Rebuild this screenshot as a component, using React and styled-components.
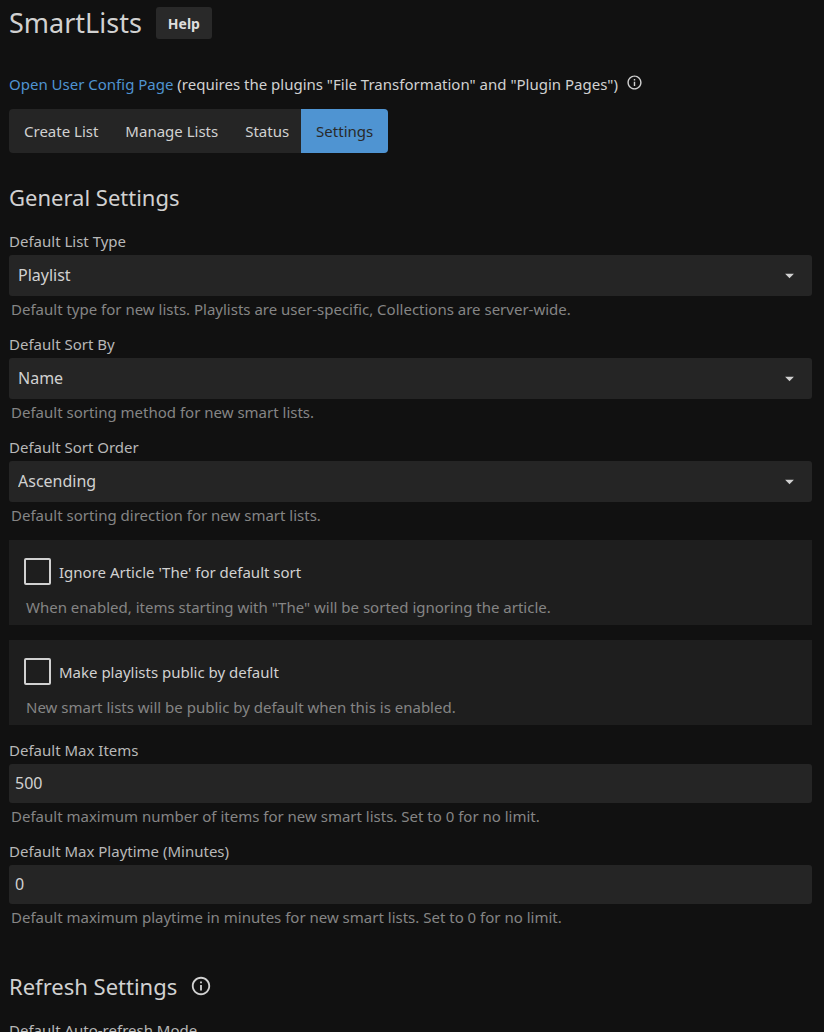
import React, { useState } from "react";
import styled, { createGlobalStyle } from "styled-components";
import { MdArrowDropDown, MdInfoOutline } from "react-icons/md";

const GlobalStyle = createGlobalStyle`
  * {
    box-sizing: border-box;
  }
  html {
    scrollbar-width: none;
  }
  body {
    margin: 0;
    background: #111;
    color: #d1d1d1;
    font-family: "Noto Sans", sans-serif;
    font-size: 15px;
    line-height: 20px;
  }
  button, input, select {
    font-family: inherit;
  }
`;

const Page = styled.main`
  height: 100vh;
  overflow-y: auto;
  scrollbar-width: none;
  padding: 7px 12px 0 9px;
`;

const Header = styled.header`
  display: flex;
  align-items: center;
  gap: 14px;
`;

const Title = styled.h1`
  margin: 0;
  font-size: 27px;
  font-weight: 400;
  line-height: 32px;
`;

const HelpButton = styled.button`
  height: 32px;
  padding: 0 12px;
  border: none;
  border-radius: 3px;
  background: #292929;
  color: #dedede;
  font-size: 14px;
  font-weight: 700;
  cursor: pointer;
`;

const Notice = styled.div`
  display: flex;
  margin-top: 35px;
  gap: 8px;
`;

const ConfigLink = styled.a`
  color: #4f94d2;
  text-decoration: none;
`;

const InfoButton = styled.button`
  display: flex;
  align-self: ${(props) => (props.$raised ? "flex-start" : "center")};
  padding: 0;
  border: none;
  background: none;
  color: inherit;
  font-size: ${(props) => (props.$raised ? "17px" : "22px")};
  cursor: pointer;
`;

const Tabs = styled.nav`
  display: flex;
  width: fit-content;
  margin-top: 15px;
  border-radius: 4px;
  background: #252525;
  overflow: hidden;
`;

const Tab = styled.button`
  height: 44px;
  padding: 0 15px;
  border: none;
  background: ${(props) => (props.$active ? "#4f94d2" : "none")};
  color: ${(props) => (props.$active ? "#292929" : "#d1d1d1")};
  font-size: 15px;
  cursor: pointer;

  & + & {
    margin-left: -3px;
  }
`;

const SectionTitle = styled.h2`
  display: flex;
  gap: 13px;
  margin: 0 0 18px;
  padding-top: 28px;
  font-size: 22px;
  font-weight: 400;
  line-height: 32px;
`;

const Field = styled.div`
  display: flex;
  flex-direction: column;
  margin-bottom: 15px;
`;

const Label = styled.label`
  margin-bottom: 4px;
  color: #b8b8b8;
`;

const SelectBox = styled.div`
  position: relative;
`;

const Select = styled.select`
  display: block;
  width: 100%;
  height: 41px;
  padding: 0 40px 2px 9px;
  border: none;
  border-radius: 3px;
  appearance: none;
  background: #252525;
  color: #d1d1d1;
  font-size: 16px;
`;

const SelectArrow = styled(MdArrowDropDown)`
  position: absolute;
  top: 10px;
  right: 12px;
  font-size: 21px;
  pointer-events: none;
`;

const Input = styled.input`
  width: 100%;
  height: 39px;
  padding: 0 6px 2px;
  border: none;
  border-radius: 3px;
  appearance: textfield;
  background: #252525;
  color: #d1d1d1;
  font-size: 16px;
`;

const Help = styled.div`
  margin-top: 3px;
  padding-left: 2px;
  color: #858585;
`;

const CheckboxPanel = styled.div`
  margin-bottom: 15px;
  padding: 18px 15px 8px;
  background: #1e1e1e;
`;

const CheckboxLabel = styled.label`
  display: flex;
  align-items: center;
  gap: 8px;
  margin-bottom: 12px;
`;

const Checkbox = styled.input`
  width: 27px;
  height: 27px;
  margin: 0;
  border: 2px solid #d1d1d1;
  border-radius: 2px;
  appearance: none;

  &:checked {
    border-color: #4f94d2;
    background: #4f94d2;
  }
`;

const SelectField = ({ id, label, options, help }) => (
  <Field>
    <Label htmlFor={id}>{label}</Label>
    <SelectBox>
      <Select id={id}>
        {options.map((option) => (
          <option key={option}>{option}</option>
        ))}
      </Select>
      <SelectArrow />
    </SelectBox>
    {help && <Help>{help}</Help>}
  </Field>
);

const NumberField = ({ id, label, value, help }) => (
  <Field>
    <Label htmlFor={id}>{label}</Label>
    <Input id={id} type="number" min="0" defaultValue={value} />
    <Help>{help}</Help>
  </Field>
);

const CheckboxField = ({ id, label, help }) => (
  <CheckboxPanel>
    <CheckboxLabel htmlFor={id}>
      <Checkbox id={id} type="checkbox" />
      {label}
    </CheckboxLabel>
    <Help>{help}</Help>
  </CheckboxPanel>
);

const tabs = ["Create List", "Manage Lists", "Status", "Settings"];

const App = () => {
  const [activeTab, setActiveTab] = useState("Settings");

  return (
    <>
      <GlobalStyle />
      <Page>
        <Header>
          <Title>SmartLists</Title>
          <HelpButton type="button">Help</HelpButton>
        </Header>

        <Notice>
          <span>
            <ConfigLink href="#config">Open User Config Page</ConfigLink> (requires the plugins "File Transformation" and
            "Plugin Pages")
          </span>
          <InfoButton type="button" $raised>
            <MdInfoOutline />
          </InfoButton>
        </Notice>

        <Tabs>
          {tabs.map((tab) => (
            <Tab key={tab} type="button" $active={tab === activeTab} onClick={() => setActiveTab(tab)}>
              {tab}
            </Tab>
          ))}
        </Tabs>

        <SectionTitle>General Settings</SectionTitle>
        <SelectField
          id="listType"
          label="Default List Type"
          options={["Playlist"]}
          help="Default type for new lists. Playlists are user-specific, Collections are server-wide."
        />
        <SelectField
          id="sortBy"
          label="Default Sort By"
          options={["Name"]}
          help="Default sorting method for new smart lists."
        />
        <SelectField
          id="sortOrder"
          label="Default Sort Order"
          options={["Ascending"]}
          help="Default sorting direction for new smart lists."
        />
        <CheckboxField
          id="ignoreArticle"
          label="Ignore Article 'The' for default sort"
          help={'When enabled, items starting with "The" will be sorted ignoring the article.'}
        />
        <CheckboxField
          id="makePublic"
          label="Make playlists public by default"
          help="New smart lists will be public by default when this is enabled."
        />
        <NumberField
          id="maxItems"
          label="Default Max Items"
          value={500}
          help="Default maximum number of items for new smart lists. Set to 0 for no limit."
        />
        <NumberField
          id="maxPlaytime"
          label="Default Max Playtime (Minutes)"
          value={0}
          help="Default maximum playtime in minutes for new smart lists. Set to 0 for no limit."
        />

        <SectionTitle>
          Refresh Settings
          <InfoButton type="button">
            <MdInfoOutline />
          </InfoButton>
        </SectionTitle>
        <SelectField id="refreshMode" label="Default Auto-refresh Mode" options={[]} />
      </Page>
    </>
  );
};

export default App;
